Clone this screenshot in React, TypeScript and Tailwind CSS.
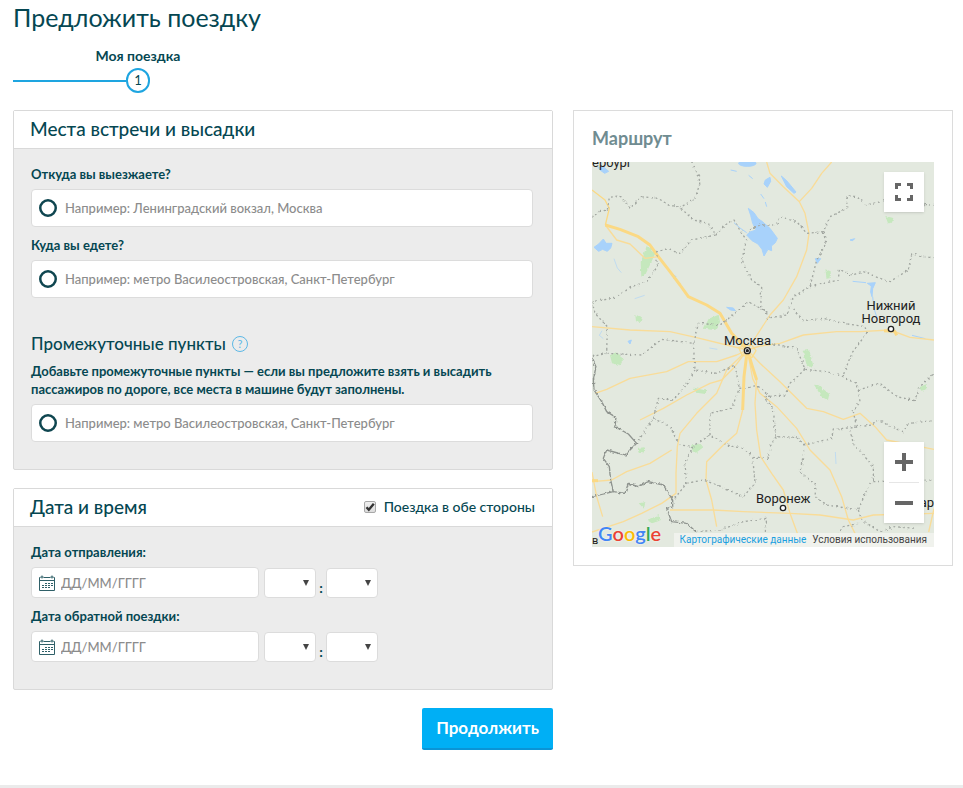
import React, { useState } from 'react';

const borders = [
  'M299 0 L319 39 L324 64 L309 109 L264 137',
  'M0 169 L19 149 L46 144 L52 106 L84 101 L114 139 L149 104 L199 109 L229 129 L264 136 L304 174 L349 184 L372 219 L299 234 L264 274 L224 261 L194 269 L196 314 L164 359 L124 372 L64 409 L0 419',
  'M372 219 L399 189 L426 174 L449 214 L464 234 L449 294 L479 354 L509 374 L506 434 L532 464',
  'M474 204 L504 189 L554 189 L564 164 L614 179 L644 214 L694 209 L714 164 L764 139 L766 101 L794 104 L824 129 L874 117 L1026 130',
  'M694 209 L702 244 L674 294 L654 374 L604 404 L584 459 L524 469',
  'M654 374 L739 354 L742 322 L779 339 L822 329 L849 344 L894 359 L949 324 L959 276 L1026 289',
  'M604 439 L634 476 L694 469 L754 484 L819 494 L824 514 L779 574 L754 639',
  'M544 546 L614 559 L639 622 L704 629 L754 644 L794 664 L799 684 L864 664 L914 704 L969 716 L984 674 L1026 634',
  'M639 622 L594 664 L579 699 L519 704 L544 744 L552 824 L614 826 L639 849 L719 829 L724 801 L784 797 L839 789 L854 774 L934 809 L949 784 L1026 776',
  'M799 684 L804 719 L784 749 L794 797',
  'M774 804 L784 844 L844 914 L844 954 L824 984 L799 1044 L704 1029 L669 1004 L672 969 L624 929 L639 854',
  'M552 824 L534 854 L529 889 L484 884 L454 859 L404 849 L354 819 L304 854 L264 849',
  'M354 819 L354 754 L419 739 L442 679 L500 674 L534 704',
  'M304 544 L309 624 L374 634 L429 609 L442 679',
  'M0 419 L9 454 L46 494 L44 574 L0 584',
  'M44 574 L149 579 L209 532 L304 544 L309 529 L319 484 L384 489 L429 454 L469 419 L532 454',
  'M309 624 L279 674 L244 714 L199 709 L184 769 L134 844',
  'M184 769 L234 794 L259 844',
  'M304 854 L279 904 L284 964 L244 1014',
  'M284 964 L334 954 L374 969 L454 1004 L489 964 L482 884',
  'M312 1109 L384 1104 L454 1079 L524 1069 L520 1110',
  'M799 1044 L809 1074 L864 1109 L904 1094 L974 1099',
  'M799 1084 L754 1094 L739 1114',
  'M844 959 L1026 954',
];

const roads = [
  'M40 189 L74 234 L114 246 L159 289 L199 284',
  'M0 494 L114 504 L234 509 L314 527 L404 549 L466 564',
  'M9 694 L44 682 L114 649 L224 629 L289 599 L374 599 L434 579 L466 564',
  'M144 774 L214 739 L284 699 L354 664 L389 654 L424 619 L466 564',
  'M466 564 L404 624 L374 694 L314 754 L264 814 L256 854 L252 934 L252 994 L209 1024 L149 1054 L94 1079 L0 1110',
  'M452 744 L434 814 L394 849 L344 899 L342 954 L359 1014 L374 1094',
  'M494 654 L489 724 L494 804 L506 884 L539 934 L574 984 L594 1054 L616 1114',
  'M466 564 L504 604 L564 659 L644 739 L694 749 L754 772 L804 754 L849 794 L884 834 L1026 862',
  'M466 564 L482 650 L504 694 L554 734 L614 799 L654 864 L714 924 L749 1004 L769 1074 L789 1114',
  'M466 564 L504 552 L564 544 L634 519 L734 509 L804 509 L894 504 L954 526 L1026 534',
  'M466 564 L534 459 L574 414 L614 344 L644 264 L651 214 L639 154 L622 119 L574 74 L534 34 L524 0',
  'M622 119 L659 79 L689 34 L719 0',
  'M234 1044 L364 1044 L454 1049 L594 1054 L684 1059 L784 1074 L844 1059 L1026 1054',
  'M0 959 L59 954 L104 929 L174 904 L239 864',
  'M0 930 L14 1004 L32 1064',
  'M1026 1040 L1010 1110',
];

const highways = [
  'M40 189 L84 202 L139 224 L174 249 L199 284 L234 329 L264 369 L289 404 L344 429 L384 454 L419 514 L466 564',
  'M466 564 L456 644 L452 744',
  'M466 564 L480 610 L494 654',
];

const frontier = [
  'M0 589 L12 614 L4 654 L6 684 L29 719 L44 749 L72 766 L69 794 L109 816 L134 844 L99 879 L44 864 L34 889 L52 914 L56 954 L64 989 L0 1004',
  'M64 989 L99 994 L109 964 L139 974 L169 959 L214 969 L242 1014 L242 1034 L224 1039 L239 1079 L284 1084 L312 1109',
];

const RouteMap = () => (
  <svg
    viewBox="0 0 1026 1155"
    preserveAspectRatio="xMidYMid slice"
    className="block h-full w-full"
    fill="none"
    strokeLinejoin="round"
    aria-hidden="true"
  >
    <defs>
      <filter id="rough" x="0" y="0" width="100%" height="100%">
        <feTurbulence type="fractalNoise" baseFrequency="0.1" numOctaves="2" seed="4" result="noise" />
        <feDisplacementMap in="SourceGraphic" in2="noise" scale="10" xChannelSelector="R" yChannelSelector="G" />
      </filter>
    </defs>
    <rect width="1026" height="1155" fill="#e3e9df" />

    {/* Forests */}
    <g fill="#c5e8bd" filter="url(#rough)">
      <path d="M165 250 L190 274 L178 300 L162 334 L148 344 L146 300 Z" />
      <path d="M335 500 L350 470 L380 458 L384 480 L370 504 Z" />
      <path d="M54 580 L74 570 L94 588 L84 610 L60 604 Z" />
      <path d="M298 850 L326 846 L334 856 L312 872 L300 868 Z" />
      <path d="M136 858 L158 856 L154 874 L140 872 Z" />
      <path d="M300 676 L345 686 L340 696 L314 692 Z" />
      <path d="M632 566 L652 564 L664 612 L646 616 Z" />
      <path d="M666 668 L680 670 L712 696 L708 714 L690 706 Z" />
      <path d="M880 162 L904 168 L900 182 L888 184 Z" />
      <path d="M700 322 L716 328 L716 348 L704 350 Z" />
      <path d="M982 676 L1004 666 L1006 682 L988 686 Z" />
      <path d="M130 460 L150 464 L146 480 L132 478 Z" />
      <path d="M140 1024 L160 1020 L156 1040 Z M164 1074 L200 1060 L210 1074 L180 1084 Z" />
    </g>

    {/* Water */}
    <g fill="#a8d2fb" stroke="#a8d2fb" strokeWidth="3">
      <path d="M469 139 L486 152 L498 170 L510 178 L534 199 L556 229 L550 242 L538 252 L539 266 L528 262 L516 282 L510 262 L498 246 L480 236 L464 219 L474 210 L492 204 L482 184 L476 160 Z" />
      <path d="M6 256 L20 246 L34 231 L42 244 L60 244 L56 258 L46 268 L32 262 L20 268 Z" />
      <ellipse cx="466" cy="4" rx="26" ry="9" />
      <path d="M568 42 L584 56 L612 90 L606 94 L584 74 Z" />
      <path d="M18 16 L36 16 L50 28 L38 34 L24 24 Z" />
      <path d="M520 54 L534 46 L536 58 L526 76 L516 66 Z" />
      <path d="M826 364 L850 362 L842 380 L840 404 L836 390 L838 372 Z" />
      <path d="M404 436 L424 438 L430 446 L416 444 Z" />
      <path d="M670 290 L686 290 L676 304 Z" />
      <path d="M108 538 L118 534 L114 546 Z" />
      <path d="M244 338 L252 344 L246 350 Z" />
      <path d="M774 234 L788 230 L782 236 Z" />
    </g>
    <g stroke="#a8d2fb" strokeWidth="3">
      <path d="M426 182 L444 198 L464 212" />
      <path d="M782 358 L822 362 M842 404 L846 440 L856 470" />
      <path d="M416 24 L434 28 M470 40 L482 50 M506 96 L516 110 M520 120 L524 134" />
      <path d="M66 290 L76 318 L88 332 M128 410 L158 400 M352 558 L376 562" opacity=".6" />
      <path d="M30 506 L22 520 L34 530 M730 870 L732 906" opacity=".6" />
      <path d="M960 520 L1000 530" />
    </g>

    <g stroke="#f9dc98" strokeWidth="4">
      {roads.map((d) => <path key={d} d={d} />)}
    </g>
    <g stroke="#fbd984" strokeWidth="9">
      {highways.map((d) => <path key={d} d={d} />)}
      <path d="M0 84 L39 114 L52 139 L40 189" strokeWidth="4" />
      <path d="M876 506 L908 508 L914 520" />
      <path d="M0 956 L18 956" />
    </g>
    <path d="M440 556 L478 548 L492 566 L480 586 L450 580 Z" stroke="#fbdd8c" strokeWidth="4" />

    {/* Region lines */}
    <g stroke="#a2a7a1" strokeWidth="4" strokeDasharray="6 8" filter="url(#rough)">
      {borders.map((d) => <path key={d} d={d} />)}
    </g>
    <g stroke="#8e938e" strokeWidth="4" filter="url(#rough)">
      {frontier.map((d) => <path key={d} d={d} />)}
    </g>

    {/* City markers */}
    <g fill="#fff" stroke="#222" strokeWidth="4">
      <circle cx="466" cy="566" r="9" />
      <circle cx="466" cy="566" r="3" fill="#222" />
      <circle cx="897" cy="501" r="8" />
      <circle cx="573" cy="1038" r="8" />
    </g>
  </svg>
);

const CalendarIcon = () => (
  <svg viewBox="0 0 16 16" className="h-4 w-4 shrink-0" fill="none" stroke="#2f6068" aria-hidden="true">
    <path d="M.5 2.5h1M4.5 2.5h7M14.5 2.5h1v13H.5v-13M.5 5.5h15" />
    <circle cx="3" cy="2" r="1" />
    <circle cx="13" cy="2" r="1" />
    <path d="M6 8.5h8M3 10.5h11M3 12.5h8" strokeDasharray="2 1" />
  </svg>
);

interface PlaceFieldProps {
  id: string;
  placeholder: string;
  label?: string;
}

const PlaceField = ({ id, placeholder, label }: PlaceFieldProps) => (
  <div className="flex h-[38px] items-center gap-2 rounded border border-[#dcdcdc] bg-white px-[7px]">
    <svg viewBox="0 0 18 18" className="h-[18px] w-[18px] shrink-0" fill="none" stroke="#0f4650" strokeWidth="2.5" aria-hidden="true">
      <circle cx="9" cy="9" r="7.75" />
    </svg>
    <input
      id={id}
      type="text"
      aria-label={label}
      placeholder={placeholder}
      className="min-w-0 flex-1 bg-transparent text-[13px] font-medium text-[#054752] outline-none placeholder:text-[#8c8c8c]"
    />
  </div>
);

const TimeSelect = ({ label }: { label: string }) => (
  <div className="relative">
    <select
      aria-label={label}
      className="block h-[30px] w-[52px] appearance-none rounded border border-[#dcdcdc] bg-white px-2 text-[13px] outline-none"
    >
      <option value=""></option>
    </select>
    <svg viewBox="0 0 6 6" className="pointer-events-none absolute top-3 right-[7px] h-1.5 w-1.5" fill="#444" aria-hidden="true">
      <path d="M0 0h6L3 6z" />
    </svg>
  </div>
);

const DateRow = ({ id }: { id: string }) => (
  <div className="flex items-end">
    <div className="flex h-[31px] w-[228px] items-center gap-1.5 rounded border border-[#dcdcdc] bg-white px-[7px]">
      <CalendarIcon />
      <input
        id={id}
        type="text"
        placeholder="ДД/ММ/ГГГГ"
        className="min-w-0 flex-1 bg-transparent text-[13px] font-medium text-[#054752] outline-none placeholder:text-[#8c8c8c]"
      />
    </div>
    <div className="ml-[5px] flex items-end">
      <TimeSelect label="Часы" />
      <span className="w-2.5 text-center text-sm">:</span>
      <TimeSelect label="Минуты" />
    </div>
  </div>
);

const App = () => {
  const [roundTrip, setRoundTrip] = useState(true);

  return (
    <div className="border-b-[3px] border-[#ebebeb] bg-white pr-2.5 pb-[35px] pl-[13px] font-[Lato,'Open_Sans',sans-serif] text-[#054752]">
      <h1 className="text-[25px] leading-[34px]">Предложить поездку</h1>

      {/* Progress */}
      <div className="mt-3 w-[250px] text-center text-sm leading-5 font-bold">Моя поездка</div>
      <div className="mt-0.5 flex items-center">
        <div className="h-0.5 w-[113px] bg-[#1ea5e0]"></div>
        <div className="flex h-[25px] w-6 items-center justify-center rounded-full border-2 border-[#1ea5e0] text-[13px]">1</div>
      </div>

      <div className="mt-[17px] grid grid-cols-[27fr_19fr] items-start gap-5">
        <form onSubmit={(e) => e.preventDefault()}>
          <section className="rounded-xs border border-[#d9d9d9] bg-[#ececec]">
            <div className="border-b border-[#d9d9d9] bg-white pb-0.5 pl-4">
              <h2 className="text-[19px] leading-[35px] font-medium">Места встречи и высадки</h2>
            </div>
            <div className="pt-4 pr-[19px] pb-[27px] pl-[17px] text-[13px] leading-[18px] font-bold">
              <label htmlFor="from" className="mb-1.5 block">Откуда вы выезжаете?</label>
              <PlaceField id="from" placeholder="Например: Ленинградский вокзал, Москва" />
              <label htmlFor="to" className="mt-[9px] mb-1.5 block">Куда вы едете?</label>
              <PlaceField id="to" placeholder="Например: метро Василеостровская, Санкт-Петербург" />

              <div className="mt-[34px] flex items-center gap-1.5">
                <h3 className="text-[17px] leading-6 font-medium">Промежуточные пункты</h3>
                <button
                  type="button"
                  aria-label="Справка"
                  className="flex h-4 w-4 items-center justify-center rounded-full border border-[#5cb8e6] text-[11px] font-normal text-[#5cb8e6]"
                >
                  ?
                </button>
              </div>
              <p className="my-1.5">
                Добавьте промежуточные пункты — если вы предложите взять и высадить пассажиров по дороге, все места в машине будут заполнены.
              </p>
              <PlaceField id="stop" label="Промежуточный пункт" placeholder="Например: метро Василеостровская, Санкт-Петербург" />
            </div>
          </section>

          <section className="mt-[18px] rounded-xs border border-[#d9d9d9] bg-[#ececec]">
            <div className="flex items-center justify-between border-b border-[#d9d9d9] bg-white pr-[17px] pb-0.5 pl-4">
              <h2 className="text-[19px] leading-[35px] font-medium">Дата и время</h2>
              <label className="flex items-center gap-2 text-sm leading-[18px] font-medium">
                <span className="relative">
                  <input
                    type="checkbox"
                    checked={roundTrip}
                    onChange={(e) => setRoundTrip(e.target.checked)}
                    className="block h-3 w-3 appearance-none rounded-xs border border-[#a8a8a8] bg-gradient-to-b from-[#f0f0f0] to-[#dcdcdc]"
                  />
                  {roundTrip && (
                    <svg viewBox="0 0 12 12" className="pointer-events-none absolute inset-0 h-3 w-3" fill="none" stroke="#333" strokeWidth="2.4" aria-hidden="true">
                      <path d="M2.5 6.2l2.3 2.5L9.8 2.8" />
                    </svg>
                  )}
                </span>
                Поездка в обе стороны
              </label>
            </div>
            <div className="pt-4 pr-[19px] pb-[27px] pl-[17px] text-[13px] leading-[18px] font-bold">
              <label htmlFor="departure" className="mb-1.5 block">Дата отправления:</label>
              <DateRow id="departure" />
              <label htmlFor="return" className="mt-[9px] mb-1.5 block">Дата обратной поездки:</label>
              <DateRow id="return" />
            </div>
          </section>

          <div className="mt-[18px] flex justify-end">
            <button type="submit" className="h-[42px] rounded-xs border-b-2 border-[#0a94d6] bg-[#00aff5] px-3.5 text-[17px] font-bold text-white">
              Продолжить
            </button>
          </div>
        </form>

        <aside className="border border-[#dcdcdc] bg-white px-[18px] pt-[15px] pb-[18px]">
          <h2 className="text-[18px] leading-6 font-bold text-[#708c91]">Маршрут</h2>
          <div className="relative mt-3 h-[385px] overflow-hidden font-[Roboto,sans-serif] text-[13px] leading-[13px] text-[#222]">
            <RouteMap />
            <span className="absolute -top-1.5 left-0">ербург</span>
            <span className="absolute top-[172px] left-[132px]">Москва</span>
            <span className="absolute top-[137px] left-[268px] w-[62px] text-center">Нижний Новгород</span>
            <span className="absolute top-[330px] left-[164px]">Воронеж</span>
            <span className="absolute top-[334px] right-0">ар</span>
            <span className="absolute bottom-0 left-0 text-[11px]">в</span>

            <button
              type="button"
              aria-label="Полный экран"
              className="absolute top-2.5 right-2.5 flex h-10 w-10 items-center justify-center bg-white shadow"
            >
              <svg viewBox="0 0 18 18" className="h-[18px] w-[18px]" fill="none" stroke="#666" strokeWidth="3">
                <path d="M1.5 6V1.5H6M12 1.5h4.5V6M16.5 12v4.5H12M6 16.5H1.5V12" />
              </svg>
            </button>
            <div className="absolute right-2.5 bottom-6 flex w-10 flex-col items-center bg-white shadow">
              <button type="button" aria-label="Увеличить" className="flex h-10 w-10 items-center justify-center">
                <svg viewBox="0 0 18 18" className="h-[18px] w-[18px]" fill="#666">
                  <path d="M7 0h4v7h7v4h-7v7H7v-7H0V7h7z" />
                </svg>
              </button>
              <span className="h-px w-[30px] bg-[#e6e6e6]"></span>
              <button type="button" aria-label="Уменьшить" className="flex h-10 w-10 items-center justify-center">
                <svg viewBox="0 0 18 18" className="h-[18px] w-[18px]" fill="#666">
                  <path d="M0 7h18v4H0z" />
                </svg>
              </button>
            </div>

            <a href="#google" className="absolute bottom-0.5 left-1.5 font-[Lato,sans-serif] text-[20px] leading-6 font-semibold [text-shadow:0_0_2px_#fff]">
              <span className="text-[#4285f4]">G</span>
              <span className="text-[#ea4335]">o</span>
              <span className="text-[#fbbc05]">o</span>
              <span className="text-[#4285f4]">g</span>
              <span className="text-[#34a853]">l</span>
              <span className="text-[#ea4335]">e</span>
            </a>
            <div className="absolute right-0 bottom-0 flex gap-1.5 bg-[#f2f4f0]/80 pr-[7px] pl-1.5 text-[10px] leading-[14px] whitespace-nowrap">
              <a href="#map-data" className="text-[#1a9fe0]">Картографические данные</a>
              <a href="#terms" className="text-[#444]">Условия использования</a>
            </div>
          </div>
        </aside>
      </div>
    </div>
  );
};

export default App;
